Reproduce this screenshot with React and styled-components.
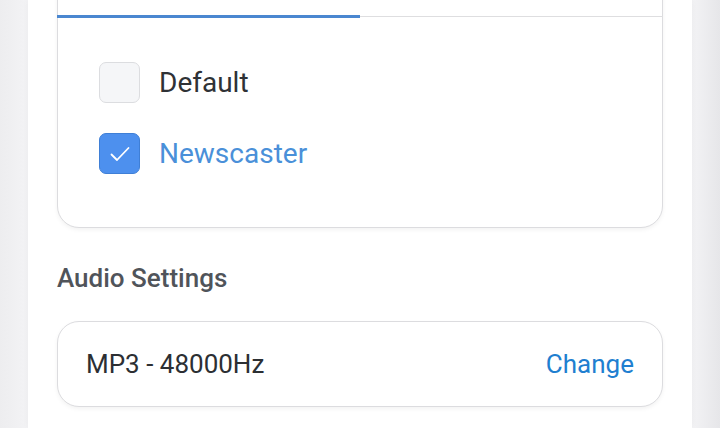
import React from "react";
import styled, { createGlobalStyle } from "styled-components";

const GlobalStyle = createGlobalStyle`
  html, body {
    margin: 0;
    padding: 0;
    background: #ececef;
    font-family: Roboto, "Liberation Sans", sans-serif;
    overflow: hidden;
  }
`;

const Page = styled.div`
  width: 720px;
  height: 428px;
  padding: 0 28px;
  box-sizing: border-box;
  background: linear-gradient(to right, #ededef 0, #f3f3f5 28px, #f3f3f5 692px, #e6e6e9 720px);
`;

const Panel = styled.div`
  height: 100%;
  display: flex;
  flex-direction: column;
  background: #ffffff;
  padding: 0 29px;
  box-shadow: 0 0 6px rgba(0, 0, 0, 0.04);
`;

const Card = styled.div`
  background: #fff;
  border: 1px solid #dcdcdf;
  border-radius: 22px;
  box-shadow: 0 2px 4px rgba(0, 0, 0, 0.05);
  box-sizing: border-box;
  flex-shrink: 0;
`;

const VoiceCard = styled(Card)`
  margin-top: -40px;
  border-top-left-radius: 0;
  border-top-right-radius: 0;
`;

const Tabs = styled.div`
  display: flex;
  height: 55px;
  border-bottom: 1px solid #dedee0;
  margin: 0 -1px;
`;

const Tab = styled.div`
  flex: 1;
  position: relative;
  ${(p) =>
    p.$active &&
    `
    &::after {
      content: "";
      position: absolute;
      left: 0;
      right: 0;
      bottom: -2px;
      height: 3px;
      background: #4a87d0;
    }
  `}
`;

const Options = styled.div`
  display: flex;
  flex-direction: column;
  gap: 30px;
  padding: 45px 41px 53px;
`;

const Option = styled.label`
  display: flex;
  align-items: center;
  gap: 19px;
  font-size: 28px;
  color: ${(p) => (p.$checked ? "#4a90d9" : "#2f3236")};
`;

const Box = styled.span`
  width: 41px;
  height: 41px;
  box-sizing: border-box;
  border-radius: 7px;
  display: flex;
  align-items: center;
  justify-content: center;
  background: ${(p) => (p.$checked ? "#4d90ee" : "#f5f6f8")};
  border: 1px solid ${(p) => (p.$checked ? "#3f7fd6" : "#dcdde0")};
`;

const Heading = styled.h2`
  margin: 35px 0 28px;
  font-size: 26px;
  line-height: 30px;
  font-weight: 500;
  color: #50545a;
`;

const FormatCard = styled(Card)`
  height: 86px;
  display: flex;
  align-items: center;
  justify-content: space-between;
  padding: 0 28px 0 28px;
  font-size: 26px;
`;

const Value = styled.span`
  color: #2c2f33;
`;

const Link = styled.span`
  color: #1f7fd0;
`;

function Check() {
  return (
    <svg width="24" height="24" viewBox="0 0 24 24" fill="none">
      <path
        d="M3.5 12.5 L9 18 L20.5 6"
        stroke="#fff"
        strokeWidth="1.8"
        strokeLinecap="round"
        strokeLinejoin="round"
      />
    </svg>
  );
}

const voices = [
  { name: "Default", checked: false },
  { name: "Newscaster", checked: true },
];

export default function App() {
  return (
    <>
      <GlobalStyle />
      <Page>
        <Panel>
          <VoiceCard>
            <Tabs>
              <Tab $active />
              <Tab />
            </Tabs>
            <Options>
              {voices.map((v) => (
                <Option key={v.name} $checked={v.checked}>
                  <Box $checked={v.checked}>{v.checked && <Check />}</Box>
                  {v.name}
                </Option>
              ))}
            </Options>
          </VoiceCard>
          <Heading>Audio Settings</Heading>
          <FormatCard>
            <Value>MP3 - 48000Hz</Value>
            <Link>Change</Link>
          </FormatCard>
        </Panel>
      </Page>
    </>
  );
}
